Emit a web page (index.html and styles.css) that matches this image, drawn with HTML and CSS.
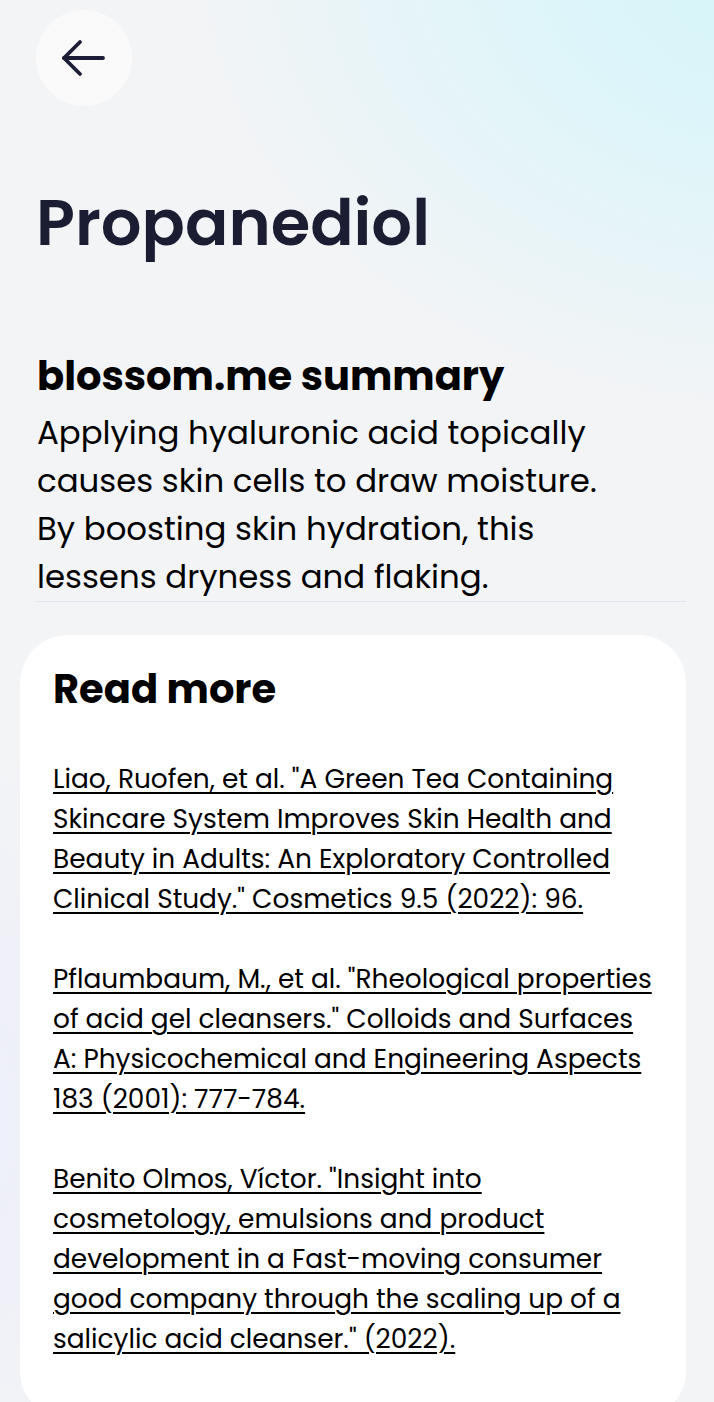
FILE: index.html
```html
<!DOCTYPE html>
<html lang="en">
<head>
<meta charset="utf-8">
<title>Propanediol</title>
<link rel="stylesheet" href="styles.css">
</head>
<body>
<div class="page">
  <header class="top">
    <button class="back" aria-label="Back">
      <svg width="48" height="48" viewBox="0 0 48 48" fill="none" stroke="#1a1d33" stroke-width="3.8" stroke-linecap="round" stroke-linejoin="round">
        <path d="M4 24 H43"/>
        <path d="M20 8 L4 24 L20 40"/>
      </svg>
    </button>
  </header>
  <h1 class="title">Propanediol</h1>
  <section class="summary">
    <h2 class="summary-title">blossom.me summary</h2>
    <p class="summary-text">Applying hyaluronic acid topically causes skin cells to draw moisture. By boosting skin hydration, this lessens dryness and flaking.</p>
  </section>
  <section class="card">
    <h2 class="card-title">Read more</h2>
    <ul class="refs">
      <li><a href="#">Liao, Ruofen, et al. "A Green Tea Containing Skincare System Improves Skin Health and Beauty in Adults: An Exploratory Controlled Clinical Study." Cosmetics 9.5 (2022): 96.</a></li>
      <li><a href="#">Pflaumbaum, M., et al. "Rheological properties of acid gel cleansers." Colloids and Surfaces A: Physicochemical and Engineering Aspects 183 (2001): 777-784.</a></li>
      <li><a href="#">Benito Olmos, Víctor. "Insight into cosmetology, emulsions and product development in a Fast-moving consumer good company through the scaling up of a salicylic acid cleanser." (2022).</a></li>
    </ul>
  </section>
</div>
</body>
</html>
```

FILE: styles.css
```css
* { box-sizing: border-box; }

html, body {
  margin: 0;
  padding: 0;
}

body {
  min-height: 1402px;
  overflow: hidden;
  font-family: "Poppins", "Open Sans", "Noto Sans", sans-serif;
  color: #000;
  background:
    radial-gradient(ellipse 600px 460px at 780px -40px, #d4f5fa 0%, rgba(214,245,250,0.75) 40%, rgba(243,244,246,0) 100%),
    radial-gradient(ellipse 260px 380px at -60px 1120px, #eceefb 0%, rgba(236,238,251,0) 100%),
    #f3f4f6;
}

.page {
  padding: 10px 28px 0 36px;
}

.top {
  display: flex;
}

.back {
  width: 96px;
  height: 96px;
  border-radius: 50%;
  border: none;
  background: #fafafa;
  display: flex;
  align-items: center;
  justify-content: center;
  padding: 0;
  cursor: pointer;
}

.title {
  margin: 77px 0 0 0;
  font-size: 64px;
  line-height: 80px;
  font-weight: 600;
  color: #1b1e33;
}

.summary {
  margin-top: 89px;
  border-bottom: 1px solid #e3e5f2;
  padding-left: 1px;
}

.summary-title {
  margin: 0;
  font-size: 40px;
  line-height: 48px;
  font-weight: 700;
  color: #000;
}

.summary-text {
  margin: 9px 0 0 0;
  font-size: 32.4px;
  line-height: 48px;
  font-weight: 400;
  color: #000;
  max-width: 580px;
}

.card {
  margin: 33px 0 0 -16px;
  background: #fff;
  border-radius: 48px;
  padding: 30px 30px 60px 33px;
}

.card-title {
  margin: 0;
  font-size: 40px;
  line-height: 48px;
  font-weight: 700;
  color: #000;
}

.refs {
  list-style: none;
  margin: 46px 0 0 0;
  padding: 0;
  display: flex;
  flex-direction: column;
  gap: 40px;
}

.refs li {
  font-size: 26.4px;
  line-height: 40px;
}

.refs a {
  color: #000;
  text-decoration: underline;
  text-underline-offset: 4px;
  text-decoration-thickness: 2px;
}
```
